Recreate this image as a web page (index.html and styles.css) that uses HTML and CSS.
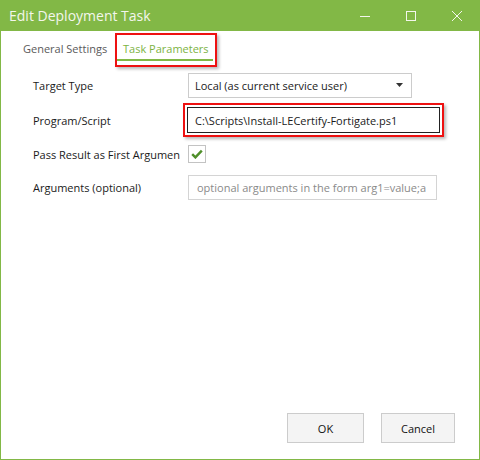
FILE: index.html
```html
<!DOCTYPE html>
<html>
<head>
<meta charset="utf-8">
<title>Edit Deployment Task</title>
<link rel="stylesheet" href="styles.css">
</head>
<body>
<div class="window">
  <div class="titlebar">
    <span class="title">Edit Deployment Task</span>
    <div class="controls">
      <span class="ctl">
        <svg width="12" height="12" viewBox="0 0 12 12"><path d="M1 6.5h10" stroke="#f3f6ec" stroke-width="1" fill="none"/></svg>
      </span>
      <span class="ctl">
        <svg width="12" height="12" viewBox="0 0 12 12"><rect x="1.5" y="1.5" width="9" height="9" stroke="#f3f6ec" stroke-width="1" fill="none"/></svg>
      </span>
      <span class="ctl">
        <svg width="12" height="12" viewBox="0 0 12 12"><path d="M1 1L11 11M11 1L1 11" stroke="#f3f6ec" stroke-width="1" fill="none"/></svg>
      </span>
    </div>
  </div>
  <div class="content">
    <div class="tabs">
      <div class="tab">General Settings</div>
      <div class="highlight tab-wrap">
        <div class="tab tab-active">Task Parameters</div>
      </div>
    </div>
    <div class="form">
      <div class="row row-1">
        <div class="label">Target Type</div>
        <div class="select">
          <span class="select-text">Local (as current service user)</span>
          <svg class="arrow" width="7" height="4" viewBox="0 0 7 4"><path d="M0 0h7L3.5 4z" fill="#333"/></svg>
        </div>
      </div>
      <div class="row row-2">
        <div class="label">Program/Script</div>
        <div class="highlight input-wrap">
          <div class="input input-focus">C:\Scripts\Install-LECertify-Fortigate.ps1</div>
        </div>
      </div>
      <div class="row row-3">
        <div class="label">Pass Result as First Argumen</div>
        <div class="checkbox">
          <svg width="12" height="10" viewBox="0 0 12 10"><path d="M1.2 5.2L4.4 8.4L10.8 1.6" stroke="#4f8f2a" stroke-width="2.4" fill="none"/></svg>
        </div>
      </div>
      <div class="row row-4">
        <div class="label">Arguments (optional)</div>
        <div class="input input-args"><span class="placeholder">optional arguments in the form arg1=value;a</span></div>
      </div>
    </div>
    <div class="footer">
      <div class="btn btn-ok">OK</div>
      <div class="btn btn-cancel">Cancel</div>
    </div>
  </div>
</div>
</body>
</html>
```
FILE: styles.css
```css
* { box-sizing: border-box; }
html, body { margin: 0; padding: 0; }
body {
  width: 480px;
  height: 460px;
  background: #ffffff;
  font-family: "Open Sans", "Noto Sans", sans-serif;
  font-size: 11px;
  color: #1a1a1a;
  overflow: hidden;
}
.window {
  width: 480px;
  height: 460px;
  border: 1px solid #82b846;
  border-top: none;
  display: flex;
  flex-direction: column;
}
.titlebar {
  height: 31px;
  background: #82b846;
  display: flex;
  align-items: center;
  margin: 0 -1px;
  flex: none;
}
.title {
  color: #f3f6ec;
  font-size: 14px;
  padding-left: 9px;
  flex: 1;
  line-height: 20px;
}
.controls { display: flex; height: 31px; }
.ctl {
  width: 46px;
  display: flex;
  align-items: center;
  justify-content: center;
}
.content {
  flex: 1;
  display: flex;
  flex-direction: column;
}
.tabs {
  display: flex;
  margin-top: 2px;
  padding-left: 16px;
  height: 34px;
  align-items: flex-start;
}
.tab {
  width: 98px;
  padding: 6px 0 0 6px;
  line-height: 20px;
  color: #5a5a5a;
  height: 32px;
  white-space: nowrap;
}
.highlight {
  border: 2px solid #ee1111;
  box-shadow: 2px 2px 3px rgba(0, 0, 0, 0.28);
}
.tab-wrap {
  width: 102px;
  height: 34px;
  padding-right: 2px;
}
.tab-active {
  width: 96px;
  height: 26px;
  padding: 4px 0 0 6px;
  color: #7db343;
  border-bottom: 2px solid #82b846;
}
.form {
  margin-top: 6px;
  padding-left: 32px;
  display: flex;
  flex-direction: column;
}
.row {
  display: flex;
  align-items: center;
}
.label {
  width: 155px;
  flex: none;
  white-space: nowrap;
  color: #1a1a1a;
}
.row-1 { height: 25px; }
.row-2 { height: 34px; margin-top: 5px; }
.row-3 { height: 26px; margin-top: 4px; }
.row-4 { height: 25px; margin-top: 8px; }
.select {
  width: 224px;
  height: 25px;
  border: 1px solid #cccccc;
  display: flex;
  align-items: center;
  padding: 0 8px 0 6px;
}
.select-text { flex: 1; }
.arrow { margin-top: -1px; }
.input-wrap {
  margin-left: -5px;
  width: 261px;
  height: 34px;
  padding: 2px;
}
.input {
  height: 26px;
  display: flex;
  align-items: center;
  white-space: nowrap;
}
.input-focus {
  border: 1px solid #222222;
  padding-left: 7px;
}
.input-args {
  width: 249px;
  height: 25px;
  border: 1px solid #d4d4d4;
  padding-left: 8px;
}
.placeholder { color: #8a8a8a; }
.checkbox {
  width: 18px;
  height: 18px;
  border: 1px solid #c3c3c3;
  display: flex;
  align-items: center;
  justify-content: center;
}
.footer {
  margin-top: auto;
  display: flex;
  justify-content: flex-end;
  padding: 0 24px 16px 0;
  gap: 17px;
}
.btn {
  height: 30px;
  border: 1px solid #cccccc;
  background: #f4f4f4;
  display: flex;
  align-items: center;
  justify-content: center;
  color: #111111;
}
.btn-ok { width: 77px; }
.btn-cancel { width: 74px; }
```
